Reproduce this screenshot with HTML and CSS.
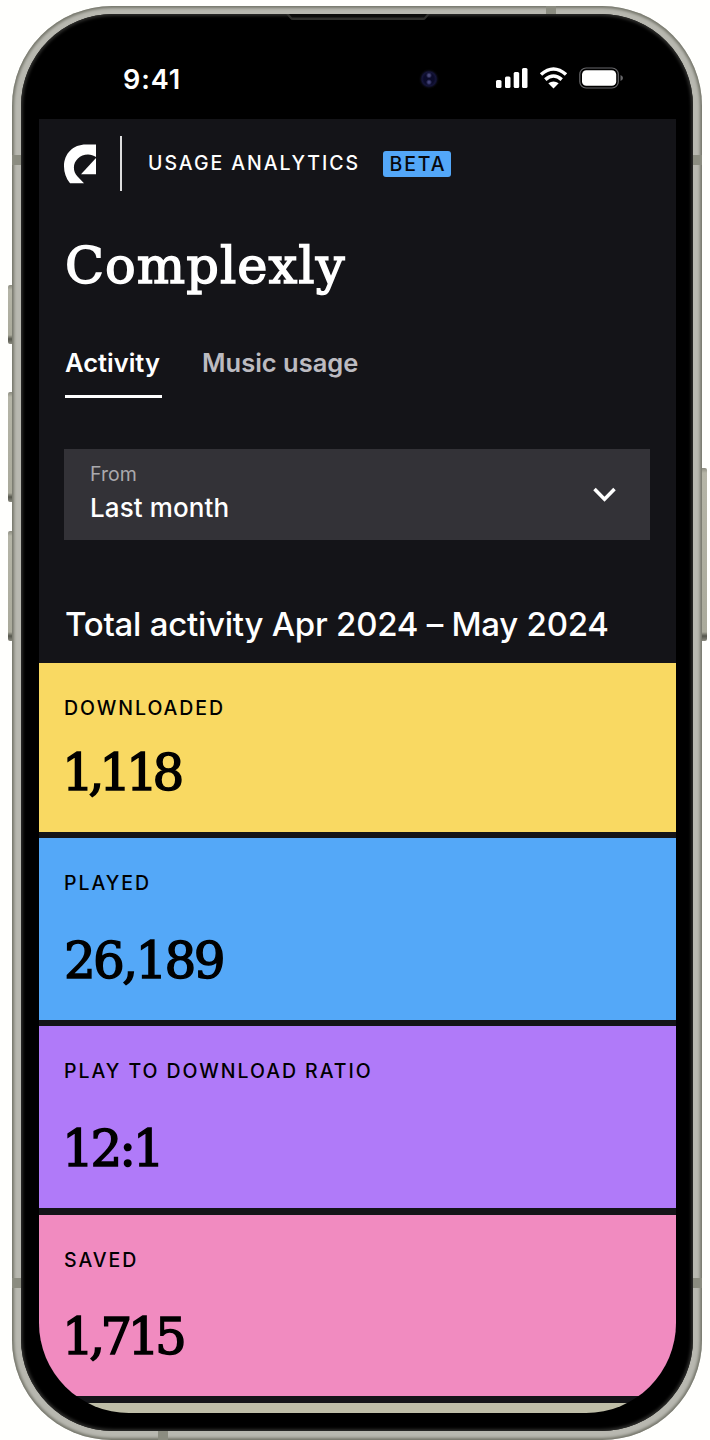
FILE: index.html
```
<!DOCTYPE html>
<html lang="en">
<head>
<meta charset="utf-8">
<title>Usage Analytics</title>
<link rel="stylesheet" href="styles.css">
</head>
<body>
<div class="phone">
  <i class="key key-action"></i><i class="key key-up"></i><i class="key key-down"></i><i class="key key-power"></i>
  <div class="frame">
    <i class="band band-tl"></i><i class="band band-tr"></i><i class="band band-bl"></i><i class="band band-br"></i><i class="band band-top"></i><i class="band band-bottom"></i>
    <div class="bezel">
      <svg class="speaker" width="144" height="8" viewBox="0 0 144 8"><path d="M0 0h144l-4 4.500q-1 1.500-3 1.500H7q-2 0-3-1.500z" fill="#30302d"/><path d="M3 0h138l-3 3.500H6z" fill="#0d0d0c"/></svg>
      <i class="camera"></i>
      <div class="status">
        <span class="time">9:41</span>
        <svg class="signals" width="130" height="24" viewBox="0 0 130 24">
          <g fill="#fff"><rect x="1" y="13" width="5.500" height="8" rx="1.500"/><rect x="10" y="9.500" width="5.500" height="11.500" rx="1.500"/><rect x="18.700" y="5" width="5.500" height="16" rx="1.500"/><rect x="27" y="1" width="5.500" height="20" rx="1.500"/>
          <path d="M58.500 21.500L53.300 16.300Q58.500 12.500 63.700 16.300z"/></g>
          <path d="M46 7.500Q58.500-3.500 71 7.500M50.300 12.600Q58.500 5.400 66.700 12.600" fill="none" stroke="#fff" stroke-width="3.600"/>
          <rect x="84.800" y="1" width="38.500" height="20" rx="6.300" fill="none" stroke="#67676a" stroke-width="1.200"/>
          <rect x="87" y="3.200" width="34.200" height="15.600" rx="4.300" fill="#fff"/>
          <path d="M125.500 8q2.500 1 2.500 3t-2.500 3z" fill="#67676a"/>
        </svg>
      </div>
      <div class="screen">
        <header class="header">
          <svg class="logo" width="33" height="40" viewBox="0 0 33 40"><path d="M32 .5V13C29.500 11.200 27 10.400 24 10.400C16 10.400 9.900 16.500 9.900 23.500C9.900 27 11 29.800 13.300 32.200L20 39.200H6C2 34.500 0 28.500 0 22.500C0 9.500 9 .5 22 .5z" fill="#fff"/><path d="M32 14V30.200H17z" fill="#fff"/></svg>
          <i class="divider"></i>
          <span class="product">USAGE ANALYTICS</span>
          <span class="beta">BETA</span>
        </header>
        <h1 class="title">Complexly</h1>
        <nav class="tabs"><a class="tab active">Activity</a><a class="tab">Music usage</a></nav>
        <div class="select">
          <div class="choice"><span class="from">From</span><span class="value">Last month</span></div>
          <svg width="24" height="18" viewBox="0 0 24 18"><path d="M1.500 3l10 10.300L21.500 3" fill="none" stroke="#fff" stroke-width="3.500"/></svg>
        </div>
        <h2 class="total">Total activity Apr 2024 – May 2024</h2>
        <main class="cards">
          <section class="card yellow"><span class="label">DOWNLOADED</span><span class="number">1,118</span></section>
          <section class="card blue"><span class="label">PLAYED</span><span class="number">26,189</span></section>
          <section class="card purple"><span class="label">PLAY TO DOWNLOAD RATIO</span><span class="number">12:1</span></section>
          <section class="card pink"><span class="label">SAVED</span><span class="number">1,715</span></section>
        </main>
      </div>
    </div>
  </div>
</div>
</body>
</html>
```
FILE: styles.css
```
* { box-sizing: border-box; }
body { margin: 0; background: #fffffd; font-family: Inter, sans-serif; color: #fff; overflow: hidden; }
.phone { position: relative; width: 690px; height: 1434px; margin: 6px 0 0 12px; }
.frame { position: relative; height: 100%; padding: 8px 9px 9px; border-radius: 100px; overflow: hidden; background: #b8b8b0; box-shadow: inset 0 0 3px 2px #74756a; }
.bezel { position: relative; height: 100%; display: flex; flex-direction: column; padding: 0 17px 18px 18px; border-radius: 92px; background: #000; box-shadow: inset 0 0 3px 2px #2c2c2a; }
.key { position: absolute; width: 5px; left: -4px; border-radius: 2px 0 0 2px; background: linear-gradient(#8c8c80, #b5b5a7 5px, #aaaa9b calc(100% - 9px), #55564c calc(100% - 5px), #8b8b80); }
.key-action { top: 279px; height: 59px; }
.key-up { top: 386px; height: 110px; }
.key-down { top: 525px; height: 110px; }
.key-power { top: 462px; height: 173px; left: 689px; width: 6px; border-radius: 0 2px 2px 0; }
.band { position: absolute; background: #8b8c80; }
.band-tl, .band-bl { left: 0; width: 10px; height: 10px; }
.band-tr, .band-br { right: 0; width: 10px; height: 10px; }
.band-tl, .band-tr { top: 149px; }
.band-bl, .band-br { top: 1272px; }
.band-top { top: 0; left: 534px; width: 10px; height: 9px; }
.band-bottom { bottom: 0; left: 146px; width: 10px; height: 9px; }
.speaker { position: absolute; top: 0; left: 265px; }
.camera { position: absolute; left: 398px; top: 55px; width: 20px; height: 20px; border-radius: 50%; background: radial-gradient(circle at 50% 32%, #494979 0 1px, transparent 3px), radial-gradient(circle at 50% 66%, #43437a 0 1px, transparent 3px), radial-gradient(circle, #0b0b2a 0 5px, #15153a 7px, #040406 9px); }
.status { height: 105px; display: flex; align-items: center; justify-content: space-between; padding: 25px 51px 0 84px; }
.time { padding-top: 1px; font-size: 27px; line-height: 30px; font-weight: 600; letter-spacing: .900px; }
.screen { flex: 1; width: 637px; display: flex; flex-direction: column; overflow: hidden; border-radius: 0 0 90px 90px; background: linear-gradient(#141418 calc(100% - 10px), #bfbea8 calc(100% - 10px)); }
.header { height: 72px; padding: 17px 25px 0; display: flex; align-items: center; }
.divider { width: 2px; height: 55px; margin: 0 26px 0 23px; background: #ddd; }
.product { width: 235px; margin-top: -1px; font-size: 19.500px; font-weight: 450; letter-spacing: 1.950px; white-space: nowrap; }
.beta { width: 68px; height: 26px; border-radius: 3px; background: #53a7f8; color: #07070b; text-align: center; padding-left: 2px; font-size: 19.500px; font-weight: 450; line-height: 26px; letter-spacing: 1.900px; }
.title, .number { font-family: "DejaVu Serif", serif; font-weight: 400; font-size: 50px; -webkit-text-stroke: 1.500px currentColor; white-space: nowrap; }
.title { margin: 45px 0 0 26px; height: 60px; line-height: 60px; font-size: 51px; letter-spacing: 1.050px; }
.tabs { display: flex; gap: 40px; margin: 45px 26px 0; height: 58px; }
.tab { height: 57px; padding-top: 5px; font-size: 25.500px; line-height: 34px; font-weight: 600; color: #bcbbc0; white-space: nowrap; }
.active { width: 97px; color: #fff; border-bottom: 3px solid #fff; }
.select { width: 586px; height: 91px; margin: 50px 0 0 25px; padding: 0 33px 0 26px; display: flex; align-items: center; justify-content: space-between; background: #333237; }
.choice { display: flex; flex-direction: column; margin-top: -2px; }
.from { font-size: 19.500px; line-height: 28px; color: #aaa9ad; }
.value { font-size: 26px; line-height: 39px; font-weight: 500; letter-spacing: .100px; }
.total { margin: 59px 0 0 26px; height: 64px; font-size: 33px; line-height: 50px; font-weight: 450; letter-spacing: -.250px; white-space: nowrap; }
.cards { display: flex; flex-direction: column; gap: 6px; color: #000; }
.card { height: 182px; padding: 32px 25px 0; display: flex; flex-direction: column; }
.label { font-size: 19.500px; line-height: 26px; font-weight: 450; letter-spacing: 1.950px; }
.number { margin: 35px 0 0 -2px; line-height: 60px; letter-spacing: -5.200px; }
.yellow { height: 169px; background: #f9d962; }
.yellow .number { margin-top: 22px; }
.blue { background: #54a8f8; }
.blue .number { margin-left: 0; letter-spacing: -2.700px; }
.purple { background: #b07af9; }
.purple .number { letter-spacing: -3.200px; }
.pink { margin-top: 1px; height: 181px; background: #f18bc0; }
.pink .number { margin-top: 34px; letter-spacing: -4.600px; }
```
